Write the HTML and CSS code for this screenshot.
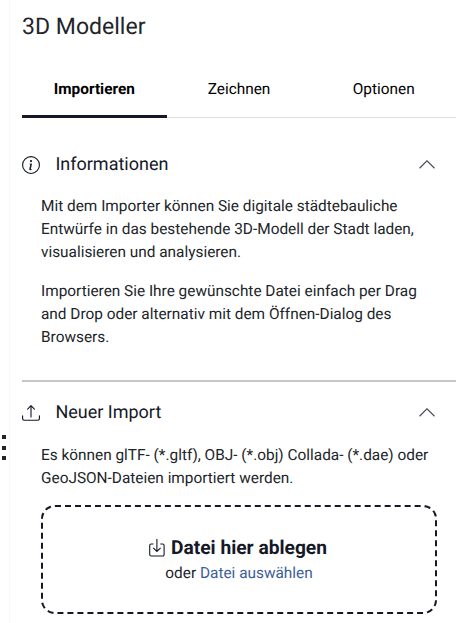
FILE: index.html
```
<!DOCTYPE html>
<html lang="de">
<head>
<meta charset="utf-8">
<title>3D Modeller</title>
<link rel="stylesheet" href="styles.css">
</head>
<body>
<div class="layout">
  <div class="handle"><i></i><i></i><i></i></div>
  <main class="panel">
    <h1 class="title">3D Modeller</h1>
    <nav class="tabs">
      <a class="tab active">Importieren</a>
      <a class="tab">Zeichnen</a>
      <a class="tab">Optionen</a>
    </nav>
    <section class="section info">
      <header class="head">
        <svg class="icon" viewBox="0 0 16 16"><path d="M8 15A7 7 0 1 1 8 1a7 7 0 0 1 0 14m0 1A8 8 0 1 0 8 0a8 8 0 0 0 0 16"/><path d="m8.93 6.588-2.29.287-.082.38.45.083c.294.07.352.176.288.469l-.738 3.468c-.194.897.105 1.319.808 1.319.545 0 1.178-.252 1.465-.598l.088-.416c-.2.176-.492.246-.686.246-.275 0-.375-.193-.304-.533zM9 4.5a1 1 0 1 1-2 0 1 1 0 0 1 2 0"/></svg>
        <h2>Informationen</h2>
        <svg class="chevron" viewBox="0 0 16 9"><path d="M.5 8.2 8 .8l7.500 7.400"/></svg>
      </header>
      <p>Mit dem Importer können Sie digitale städtebauliche<br>Entwürfe in das bestehende 3D-Modell der Stadt laden,<br>visualisieren und analysieren.</p>
      <p>Importieren Sie Ihre gewünschte Datei einfach per Drag<br>and Drop oder alternativ mit dem Öffnen-Dialog des<br>Browsers.</p>
    </section>
    <section class="section import">
      <header class="head">
        <svg class="icon" viewBox="0 0 16 16"><path d="M.5 9.900a.5.5 0 0 1 .5.5v2.500a1 1 0 0 0 1 1h12a1 1 0 0 0 1-1v-2.500a.5.5 0 0 1 1 0v2.500a2 2 0 0 1-2 2H2a2 2 0 0 1-2-2v-2.500a.5.5 0 0 1 .5-.5"/><path d="M7.646 1.146a.5.5 0 0 1 .708 0l3 3a.5.5 0 0 1-.708.708L8.500 2.707V11.500a.5.5 0 0 1-1 0V2.707L5.354 4.854a.5.5 0 1 1-.708-.708z"/></svg>
        <h2>Neuer Import</h2>
        <svg class="chevron" viewBox="0 0 16 9"><path d="M.5 8.200 8 .8l7.500 7.400"/></svg>
      </header>
      <p>Es können glTF- (*.gltf), OBJ- (*.obj) Collada- (*.dae) oder<br>GeoJSON-Dateien importiert werden.</p>
      <div class="drop">
        <div class="drop-title">
          <svg class="drop-icon" viewBox="0 0 16 18"><path d="M4.500 5H2.200A1.500 1.500 0 0 0 .7 6.500v9A1.500 1.500 0 0 0 2.200 17h11.400a1.500 1.500 0 0 0 1.500-1.500v-9A1.500 1.500 0 0 0 13.600 5h-2.300M7.900 0v12.400M4.200 8.800l3.700 3.700 3.700-3.700"/></svg>
          <strong>Datei hier ablegen</strong>
        </div>
        <div class="drop-sub">oder <a>Datei auswählen</a></div>
      </div>
    </section>
  </main>
</div>
</body>
</html>
```
FILE: styles.css
```
* { box-sizing: border-box; }
body {
  margin: 0;
  background: #fff;
  color: #212529;
  font: 15.39px/23px Roboto, sans-serif;
  text-rendering: geometricPrecision;
  overflow: hidden;
}
h1, h2, p { margin: 0; font-weight: 400; }
.layout { display: flex; height: 623px; }
.handle {
  width: 10px;
  border-right: 1px solid #f8f8f8;
  padding: 435px 0 0 2px;
  display: flex;
  flex-direction: column;
  gap: 6.5px;
}
.handle i { width: 4px; height: 4px; background: #212529; }
.panel { width: 446px; padding-left: 12px; }
.title { font-size: 23.04px; line-height: 28px; padding-top: 13px; }
.tabs {
  display: flex;
  margin-top: 19px;
  height: 58px;
  border-bottom: 1px solid #ddd;
}
.tab { flex: 1; height: 58px; line-height: 58px; text-align: center; color: #000; }
.active { font-weight: 700; border-bottom: 3px solid #151927; }
.head { display: flex; align-items: center; height: 28px; color: #151927; }
.head h2 { font-size: 18px; line-height: 28px; flex: 1; margin: 2px 0 0 15.4px; }
.icon { width: 18px; height: 18px; fill: #151927; margin-top: 2px; }
.chevron { width: 16px; height: 9px; margin: 1px 21px 0 0; fill: none; stroke: #4c505c; stroke-width: 1.2; }
.info { padding-top: 32px; height: 264px; border-bottom: 2px solid #c6c6c6; }
.import { padding-top: 16px; }
.section p { margin: 16px 0 0 19px; white-space: nowrap; }
.section .head + p { margin-top: 17px; }
.import .head + p { margin-top: 18px; }
.drop {
  height: 109px;
  margin: 15px 19px 0 19px;
  border: 2px dashed #151927;
  border-radius: 14px;
  text-align: center;
  padding-top: 28px;
}
.drop-title { display: flex; justify-content: center; align-items: center; height: 26px; margin-left: -2px; color: #151927; }
.drop-title strong { font-size: 19.2px; line-height: 26px; }
.drop-icon { width: 16px; height: 18px; margin: -1px 6px 0 0; fill: none; stroke: #151927; stroke-width: 1.1; }
.drop-sub { line-height: 24px; }
.drop-sub a { color: #3c5e98; }
```
